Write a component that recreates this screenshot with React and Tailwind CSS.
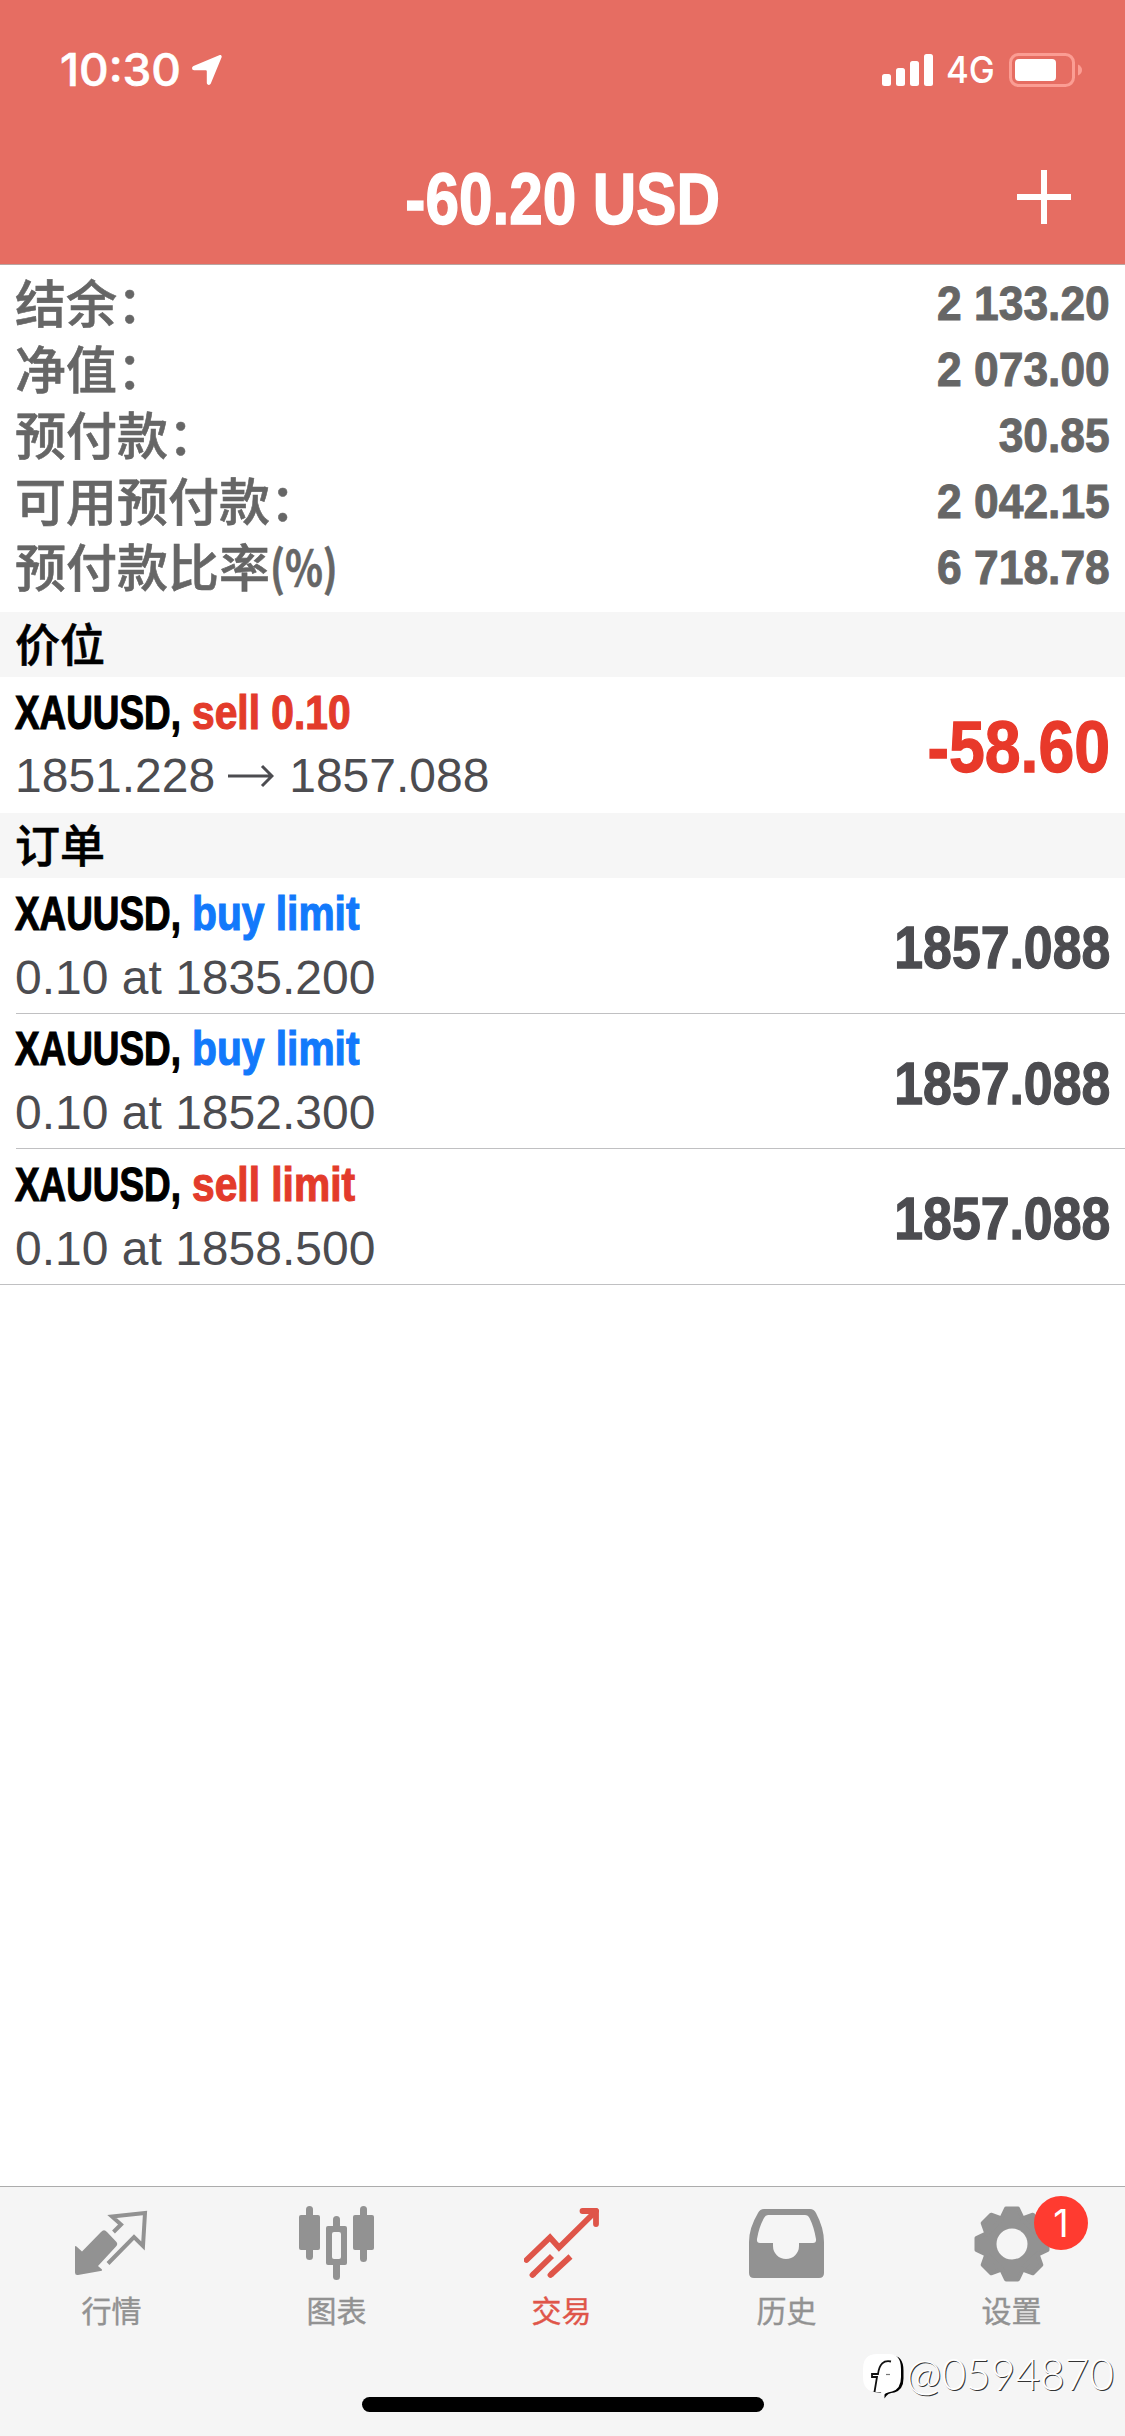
import React from 'react';

const account = [
  { label: '结余：', value: '2 133.20' },
  { label: '净值：', value: '2 073.00' },
  { label: '预付款：', value: '30.85' },
  { label: '可用预付款：', value: '2 042.15' },
  { label: '预付款比率', unit: '(%)', value: '6 718.78' },
];

const orders = [
  { symbol: 'XAUUSD,', type: 'buy limit', detail: '0.10 at 1835.200', price: '1857.088' },
  { symbol: 'XAUUSD,', type: 'buy limit', detail: '0.10 at 1852.300', price: '1857.088' },
  { symbol: 'XAUUSD,', type: 'sell limit', detail: '0.10 at 1858.500', price: '1857.088' },
];

function StatusBar() {
  return (
    <div className="flex h-[132px] items-start justify-between pl-[60px] pr-[42px] pt-[46px] text-white">
      <div className="flex items-center">
        <span className="w-[132px] pt-px font-['Inter',sans-serif] text-[45px] leading-[46px] font-medium whitespace-nowrap [-webkit-text-stroke:0.6px_currentColor]">
          <span className="inline-block origin-left scale-x-[1.02]">10:30</span>
        </span>
        <svg className="h-[32px] w-[30px]" viewBox="0 0 30 32" fill="currentColor">
          <path d="M27.2 1.3C28.9.5 30.2 1.8 29.5 3.6L18.8 29.6C17.9 31.7 14.8 31.2 14.8 28.8V17.2Q14.8 16.2 13.8 16.2H2.2C-.3 16.2-.7 13 1.5 12.1Z" />
        </svg>
      </div>
      <div className="flex items-center pt-[6px]">
        <svg className="h-[34px] w-[51px]" viewBox="0 0 51 34" fill="currentColor">
          <rect x="0" y="21" width="9" height="12" rx="2.5" />
          <rect x="14" y="15" width="9" height="18" rx="2.5" />
          <rect x="28" y="8" width="9" height="25" rx="2.5" />
          <rect x="42" y="1" width="9" height="32" rx="2.5" />
        </svg>
        <span className="ml-[13px] w-[49px] font-['Inter',sans-serif] text-[37px] leading-[36px] font-medium whitespace-nowrap">
          <span className="inline-block origin-left scale-x-[0.94]">4G</span>
        </span>
        <svg className="ml-[14px] h-[36px] w-[74px]" viewBox="0 0 74 36">
          <rect x="1.5" y="2.5" width="63" height="31" rx="8" fill="none" stroke="#fb9d93" strokeWidth="3" />
          <rect x="6" y="7" width="41" height="22" rx="4" fill="#fff" />
          <path d="M69 12.500q4 2 4 5.500t-4 5.500z" fill="#fb9d93" />
        </svg>
      </div>
    </div>
  );
}

function Header() {
  return (
    <header className="h-[265px] border-b border-[#b9a5a2] bg-[#e66d62]">
      <StatusBar />
      <div className="relative flex h-[132px] items-center justify-center text-white">
        <h1 className="scale-x-[0.825] pt-[2px] text-[73px] leading-[80px] font-bold whitespace-nowrap [-webkit-text-stroke:1.5px_currentColor]">-60.20 USD</h1>
        <svg className="absolute top-[38px] right-[53px] h-[55px] w-[56px]" viewBox="0 0 56 55" stroke="currentColor" strokeWidth="6">
          <path d="M28 0V54M1 27H55" />
        </svg>
      </div>
    </header>
  );
}

function Section({ title }) {
  return (
    <div className="flex h-[65px] items-center bg-[#f6f6f6] pt-[4px] pl-[15px] text-[45px] leading-[60px] font-medium text-black [-webkit-text-stroke:0.6px_currentColor]">
      {title}
    </div>
  );
}

function Title({ symbol, type }) {
  return (
    <div className="flex h-[56px] items-center pb-[2px] text-[48.5px] leading-[54px] font-bold whitespace-nowrap [-webkit-text-stroke:1.2px_currentColor]">
      <span className="w-[177px] text-black">
        <span className="inline-block origin-left scale-x-[0.76]">{symbol}</span>
      </span>
      <span className={type.startsWith('buy') ? 'text-[#1279fb]' : 'text-[#e33b2b]'}>
        <span className="inline-block origin-left scale-x-[0.84]">{type}</span>
      </span>
    </div>
  );
}

function MarketIcon() {
  return (
    <svg className="h-[76px] w-[76px]" viewBox="0 0 76 76">
      <path d="M1 41Q1 39.500 2.500 40.500L8 45.500L27 26Q30 22.500 33 26L42 35.500Q44.500 38 42 40.500L24 60L28 63.500Q28.500 65 26.500 65L4 69Q1 69.500 1 66.500Z" fill="#929292" />
      <path d="M39.500 26L47 18.500L38 10.500L71 7L69 40L60 31L34 57.500" fill="none" stroke="#929292" strokeWidth="4" />
    </svg>
  );
}

function ChartIcon() {
  return (
    <svg className="h-[76px] w-[76px]" viewBox="0 0 76 76" fill="#929292">
      <rect x="7" y="0" width="7" height="54" rx="3.5" />
      <rect x="0" y="9" width="21" height="35" rx="2" />
      <rect x="34" y="10" width="7" height="64" rx="3.5" />
      <rect x="27" y="20" width="21" height="39" rx="2" />
      <rect x="33" y="26" width="9" height="27" rx="2" fill="#f5f5f5" />
      <rect x="61" y="0" width="7" height="56" rx="3.5" />
      <rect x="54" y="9" width="21" height="35" rx="2" />
    </svg>
  );
}

function TradeIcon() {
  return (
    <svg className="h-[76px] w-[76px]" viewBox="0 0 76 76" fill="none" stroke="#df5549" strokeWidth="5.800">
      <path d="M2.500 54L26 31.500L35 41.500L72 5" strokeLinecap="round" />
      <path d="M58.500 5H72V18" strokeLinecap="round" strokeLinejoin="round" />
      <path d="M28 50L9 68.500M46.500 50.500L27 68.500" />
      <path d="M9 68.500l-.5.5M27 68.500l-.5.5" strokeLinecap="round" />
    </svg>
  );
}

function HistoryIcon() {
  return (
    <svg className="h-[76px] w-[76px]" viewBox="0 0 76 76">
      <path fillRule="evenodd" fill="#929292" d="M15 3H61Q65 3 67 7Q75 22 75 36V67Q75 72 70 72H5Q0 72 0 67V36Q0 22 9 7Q11 3 15 3ZM19 9H56Q59 9 60.500 12Q65 21 67 33Q67.500 37 64 37H50V40A13 13 0 0 1 24 40V37H11Q7.500 37 8 33Q10 21 15 12Q16.500 9 19 9Z" />
    </svg>
  );
}

function SettingsIcon() {
  return (
    <svg className="h-[76px] w-[76px]" viewBox="-38 -38 76 76">
      <g fill="#929292" stroke="#929292" strokeWidth="4" strokeLinejoin="round">
        <circle r="27" />
        {[0, 45, 90, 135, 180, 225, 270, 315].map((angle) => (
          <path key={angle} transform={`rotate(${angle})`} d="M-11 -25L-6 -35.500H6L11 -25Z" />
        ))}
      </g>
      <circle r="15.500" fill="#f5f5f5" />
    </svg>
  );
}

const tabs = [
  { label: '行情', Icon: MarketIcon },
  { label: '图表', Icon: ChartIcon },
  { label: '交易', Icon: TradeIcon, active: true },
  { label: '历史', Icon: HistoryIcon },
  { label: '设置', Icon: SettingsIcon, badge: 1 },
];

function TabBar() {
  return (
    <nav className="relative h-[250px] border-t border-[#acacac] bg-[#f5f5f5]">
      <div className="mr-px -ml-px flex">
        {tabs.map(({ label, Icon, active, badge }) => (
          <div key={label} className="relative flex flex-1 flex-col items-center pt-[19px]">
            <Icon />
            <span className={`mt-[10px] text-[30px] leading-[40px] [-webkit-text-stroke:0.4px_currentColor] ${active ? 'text-[#df5549]' : 'text-[#929292]'}`}>
              {label}
            </span>
            {badge && (
              <span className="absolute top-[9px] left-[135px] flex h-[54px] w-[54px] items-center justify-center rounded-full bg-[#ff3b30] font-['Inter',sans-serif] text-[38px] leading-none text-white">
                {badge}
              </span>
            )}
          </div>
        ))}
      </div>
      <div className="mx-auto mt-[65px] h-[15px] w-[402px] rounded-full bg-black" />

      {/* Community handle */}
      <div className="absolute right-[11px] bottom-[36px] flex items-start">
        <svg className="h-[46px] w-[42px]" viewBox="0 0 42 46">
          <path d="M15 1H27Q39 1 39 16V24Q39 35 30 38Q23 38 20 44L20 38H15Q2 38 2 24V16Q2 1 15 1Z" fill="#000" transform="translate(1.500 .5)" />
          <path d="M14 0H26Q38 0 38 15V23Q38 35 29 37.500Q22 38.500 19 42.500L18 38H14Q0 38 0 23V15Q0 0 14 0Z" fill="#fff" />
          <path d="M28 7.500Q17 5 15 20H9V23H14L11.500 38" fill="none" stroke="#111" strokeWidth="1.800" />
          <path d="M23 20.500H27" stroke="#777" strokeWidth="1.200" />
        </svg>
        <span className="-mt-[3px] ml-px font-['Lato',sans-serif] text-[42.5px] leading-[46px] font-light text-white [text-shadow:1px_1px_0_#333]">
          @0594870
        </span>
      </div>
    </nav>
  );
}

export default function App() {
  return (
    <div className="flex h-[2436px] w-[1125px] flex-col overflow-hidden bg-white font-['Liberation_Sans','Noto_Sans_CJK_SC',sans-serif]">
      <Header />

      <main className="flex-1">
        <div className="h-[347px] pt-[5px] pr-[15px] pl-[15px]">
          {account.map((row) => (
            <div key={row.label} className="flex h-[66px] items-center justify-between font-bold text-[#666]">
              <span className="flex pb-[4px] font-['Noto_Sans_CJK_SC',sans-serif] text-[51px] leading-[62px] font-medium whitespace-nowrap [-webkit-text-stroke:0.6px_currentColor]">
                {row.label}
                {row.unit && <span className="inline-block origin-left scale-x-[0.82] text-[48px] font-bold">{row.unit}</span>}
              </span>
              <span className="origin-right scale-x-[0.905] pb-px text-[49px] leading-[64px] whitespace-nowrap [-webkit-text-stroke:1px_currentColor]">{row.value}</span>
            </div>
          ))}
        </div>

        <Section title="价位" />
        <div className="flex h-[136px] items-center justify-between pr-[15px] pl-[15px]">
          <div>
            <Title symbol="XAUUSD," type="sell 0.10" />
            <div className="flex h-[64px] items-center pt-[5px] text-[48px] leading-[64px] text-[#4c4c50]">
              <span>1851.228</span>
              <svg className="mr-[15px] ml-[13px] h-[24px] w-[46px]" viewBox="0 0 46 24" fill="none" stroke="currentColor" strokeWidth="3">
                <path d="M0 12H44M34 2L44 12L34 22" />
              </svg>
              <span>1857.088</span>
            </div>
          </div>
          <span className="origin-right scale-x-[0.895] pt-[4px] text-[72px] leading-[80px] font-bold text-[#e8392a] [-webkit-text-stroke:1.3px_currentColor]">-58.60</span>
        </div>

        <Section title="订单" />
        <div className="border-b border-[#c0c0c2]">
          {orders.map((order, i) => (
            <div key={order.detail} className="pl-[16px]">
              <div className={`flex items-center justify-between pr-[15px] ${i > 0 ? 'border-t border-[#c0c0c2]' : ''} ${i === 2 ? 'h-[136px]' : 'h-[135px]'}`}>
                <div className="-ml-px">
                  <Title symbol={order.symbol} type={order.type} />
                  <div className="h-[64px] pt-[4px] text-[48px] leading-[64px] text-[#4c4c50]">{order.detail}</div>
                </div>
                <span className="origin-right scale-x-[0.863] pt-[5px] text-[60px] leading-[80px] font-bold text-[#4c4c50] [-webkit-text-stroke:1.3px_currentColor]">{order.price}</span>
              </div>
            </div>
          ))}
        </div>
      </main>

      <TabBar />
    </div>
  );
}
